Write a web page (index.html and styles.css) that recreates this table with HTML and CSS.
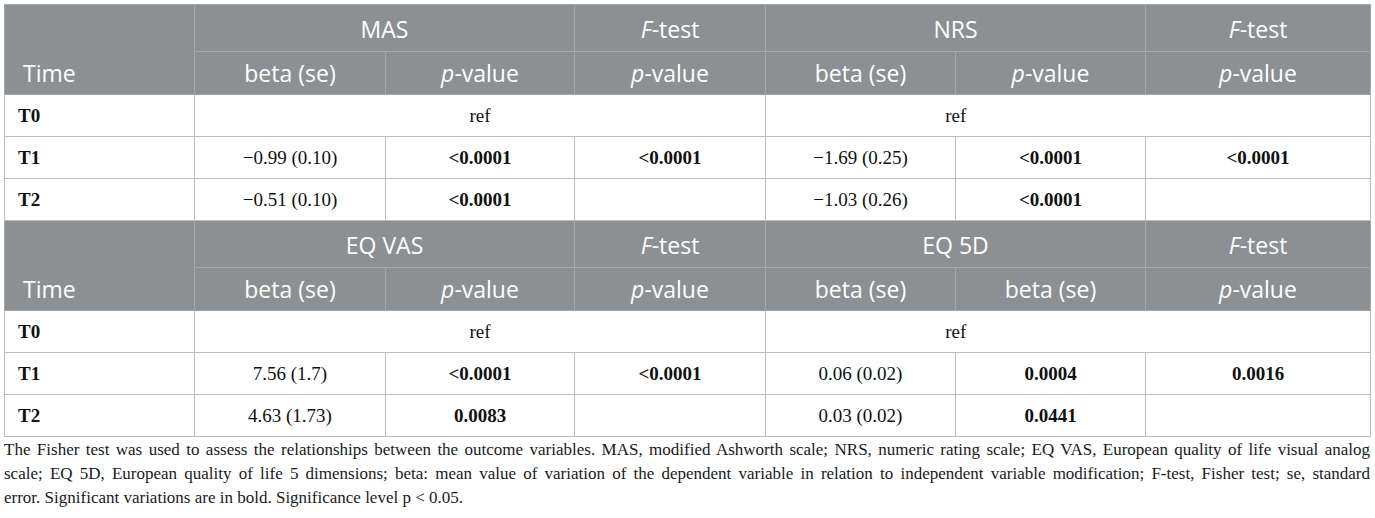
FILE: index.html
```html
<!DOCTYPE html>
<html lang="en">
<head>
<meta charset="utf-8">
<title>Table</title>
<link rel="stylesheet" href="styles.css">
</head>
<body>
<div class="wrap">
<table class="data">
  <colgroup>
    <col class="c-time"><col class="c-a"><col class="c-b"><col class="c-c"><col class="c-d"><col class="c-e"><col class="c-f">
  </colgroup>
  <tbody>
    <tr class="hrow top">
      <th class="h-time" rowspan="2">Time</th>
      <th colspan="2" class="h-group">MAS</th>
      <th class="h-group"><i>F</i>-test</th>
      <th colspan="2" class="h-group">NRS</th>
      <th class="h-group"><i>F</i>-test</th>
    </tr>
    <tr class="hrow sub">
      <th>beta (se)</th>
      <th><i>p</i>-value</th>
      <th><i>p</i>-value</th>
      <th>beta (se)</th>
      <th><i>p</i>-value</th>
      <th><i>p</i>-value</th>
    </tr>
    <tr class="brow">
      <td class="t">T0</td>
      <td colspan="3">ref</td>
      <td colspan="2" class="nr">ref</td>
      <td class="nl"></td>
    </tr>
    <tr class="brow">
      <td class="t">T1</td>
      <td>&minus;0.99 (0.10)</td>
      <td><b>&lt;0.0001</b></td>
      <td><b>&lt;0.0001</b></td>
      <td>&minus;1.69 (0.25)</td>
      <td><b>&lt;0.0001</b></td>
      <td><b>&lt;0.0001</b></td>
    </tr>
    <tr class="brow">
      <td class="t">T2</td>
      <td>&minus;0.51 (0.10)</td>
      <td><b>&lt;0.0001</b></td>
      <td></td>
      <td>&minus;1.03 (0.26)</td>
      <td><b>&lt;0.0001</b></td>
      <td></td>
    </tr>
    <tr class="hrow top">
      <th class="h-time" rowspan="2">Time</th>
      <th colspan="2" class="h-group">EQ VAS</th>
      <th class="h-group"><i>F</i>-test</th>
      <th colspan="2" class="h-group">EQ 5D</th>
      <th class="h-group"><i>F</i>-test</th>
    </tr>
    <tr class="hrow sub">
      <th>beta (se)</th>
      <th><i>p</i>-value</th>
      <th><i>p</i>-value</th>
      <th>beta (se)</th>
      <th>beta (se)</th>
      <th><i>p</i>-value</th>
    </tr>
    <tr class="brow">
      <td class="t">T0</td>
      <td colspan="3">ref</td>
      <td colspan="2" class="nr">ref</td>
      <td class="nl"></td>
    </tr>
    <tr class="brow">
      <td class="t">T1</td>
      <td>7.56 (1.7)</td>
      <td><b>&lt;0.0001</b></td>
      <td><b>&lt;0.0001</b></td>
      <td>0.06 (0.02)</td>
      <td><b>0.0004</b></td>
      <td><b>0.0016</b></td>
    </tr>
    <tr class="brow">
      <td class="t">T2</td>
      <td>4.63 (1.73)</td>
      <td><b>0.0083</b></td>
      <td></td>
      <td>0.03 (0.02)</td>
      <td><b>0.0441</b></td>
      <td></td>
    </tr>
  </tbody>
</table>
<p class="note"><span class="ln">The Fisher test was used to assess the relationships between the outcome variables. MAS, modified Ashworth scale; NRS, numeric rating scale; EQ VAS, European quality of life visual analog</span> <span class="ln">scale; EQ 5D, European quality of life 5 dimensions; beta: mean value of variation of the dependent variable in relation to independent variable modification; F-test, Fisher test; se, standard</span> <span class="last">error. Significant variations are in bold. Significance level p &lt; 0.05.</span></p>
</div>
</body>
</html>
```
FILE: styles.css
```css
html, body {
  margin: 0;
  padding: 0;
  background: #ffffff;
}
.wrap {
  padding: 4px 5px 0 4px;
  width: 1366px;
}
.data {
  border-collapse: collapse;
  table-layout: fixed;
  width: 1366px;
  border: 1px solid #c3c6c4;
}
.c-time { width: 190px; }
.c-a { width: 191px; }
.c-b { width: 189px; }
.c-c { width: 191px; }
.c-d { width: 190px; }
.c-e { width: 190px; }
.c-f { width: 225px; }

.hrow th {
  background: #8c9092;
  color: #ffffff;
  font-family: "Open Sans", "Noto Sans", sans-serif;
  font-weight: 400;
  font-size: 23px;
  text-align: center;
  padding: 0 8px;
  border: 1px solid #a4a8aa;
  white-space: nowrap;
}
.hrow.top th { height: 45px; }
.hrow.sub th { height: 42px; }
.hrow th i { font-style: italic; }
.hrow th.h-time {
  text-align: left;
  vertical-align: bottom;
  padding: 0 0 5px 18px;
}
.hrow.top th.h-group { vertical-align: middle; padding-top: 1px; }

.brow td {
  height: 41px;
  font-family: "Liberation Serif", "Times New Roman", serif;
  font-size: 19px;
  color: #111111;
  text-align: center;
  vertical-align: middle;
  padding: 0 6px;
  border: 1px solid #bdbfbe;
  white-space: nowrap;
}
.brow td.t {
  text-align: left;
  font-weight: 700;
  padding-left: 13px;
}
.brow td b { font-weight: 700; }
.brow td.nr { border-right: none; }
.brow td.nl { border-left: none; }

.note {
  margin: 1px 0 0 0;
  font-family: "Liberation Serif", "Times New Roman", serif;
  font-size: 17px;
  line-height: 24px;
  color: #1a1a1a;
}
.note .ln {
  display: block;
  text-align: justify;
  text-align-last: justify;
  white-space: nowrap;
}
.note .ln {
  white-space: normal;
}
.note .last {
  display: block;
}
```
